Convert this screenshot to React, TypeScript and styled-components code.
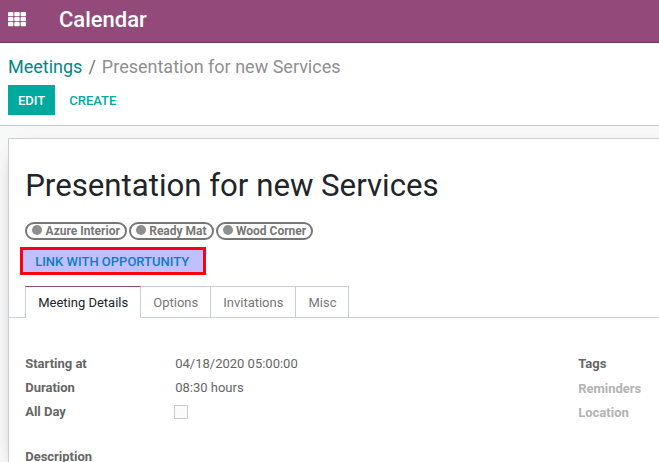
import React from "react";
import styled, { createGlobalStyle } from "styled-components";

const Global = createGlobalStyle`
  *{box-sizing:border-box}
  body{margin:0;overflow:hidden;font-family:Roboto,sans-serif;font-size:13px;background:#f8f8f8;color:#666}
  button{font-family:inherit}
`;
const Page = styled.div`width:659px;height:462px;overflow:hidden;background:#f8f8f8;`;
const Navbar = styled.header`height:43px;background:#934a7b;border-bottom:1px solid #6d3a5d;display:flex;align-items:center;padding:0 0 3px 8px;color:#fff;`;
const AppName = styled.h1`margin:0 0 0 33px;font-size:22px;font-weight:500;line-height:30px;`;
const Control = styled.div`height:83px;background:#fff;border-bottom:1px solid #ccc;padding:12px 8px 0;`;
const Crumbs = styled.div`display:flex;font-size:18px;line-height:23px;color:#8f8f8f;`;
const CrumbLink = styled.span`color:#008784;`;
const Slash = styled.span`padding:0 6px;color:#777;`;
const Actions = styled.div`display:flex;margin-top:7px;`;
const Button = styled.button<{ $primary?: boolean }>`
  height:30px;border:0;padding:0 10px;font-size:13px;font-weight:500;
  background:${p => p.$primary ? "#00a99d" : "transparent"};color:${p => p.$primary ? "#fff" : "#00a99d"};
  & + &{margin-left:4px}
`;
const Sheet = styled.main`margin:12px 0 0 8px;height:330px;width:680px;background:#fff;border:1px solid #c8d0d6;box-shadow:0 5px 20px -15px #000;padding:28px 0 0 16.2px;`;
const Title = styled.h2`margin:0;font-size:31.2px;line-height:38px;font-weight:400;color:#212529;`;
const Tags = styled.div`display:flex;gap:2px;margin-top:17px;`;
const Tag = styled.span`height:18px;border:2px solid #777;border-radius:9px;display:flex;align-items:center;padding:0 5px;font-size:12px;font-weight:700;color:#777;`;
const Dot = styled.i`width:10px;height:10px;border-radius:50%;background:#8f8f8f;margin:-2px 3.4px 0 0;`;
const LinkButton = styled.button`display:block;margin:7px 0 0 -5px;width:186px;height:28px;border:3px solid #ff0010;background:#c0bfff;color:#0d7dc0;font-size:13px;font-weight:500;padding:1px 2px 0 0;`;
const TabBar = styled.nav`display:flex;height:32px;margin:11px 0 0 -16.2px;padding-left:16.2px;border-bottom:1px solid #c8d0d6;`;
const Tab = styled.div<{ $active?: boolean }>`
  height:${p => p.$active ? 32 : 31}px;line-height:31px;padding:0 12px;border:1px solid #c8d0d6;border-left-width:${p => p.$active ? 1 : 0}px;border-bottom:0;
  border-top-color:${p => p.$active ? "#934a7b" : "#c8d0d6"};background:#fff;color:${p => p.$active ? "#212529" : "#777"};
`;
const Groups = styled.div`display:grid;grid-template-columns:553px 1fr;margin-top:34px;`;
const Row = styled.div<{ $drop?: boolean }>`display:grid;grid-template-columns:150px 1fr;height:${p => p.$drop ? 25 : 24}px;line-height:24px;align-items:start;`;
const Label = styled.label<{ $muted?: boolean }>`font-weight:700;color:${p => p.$muted ? "#b3b3b3" : "#666"};`;
const Check = styled.span`width:14px;height:14px;border:1px solid #ccc;background:#fbfbfb;margin:5px 0 0 -1px;`;
const Description = styled.div`margin-top:20px;font-weight:700;line-height:24px;`;

const Apps = () => <svg width="18" height="15" viewBox="0 0 18 15" fill="#fff">{[0, 1, 2].flatMap(y => [0, 1, 2].map(x => <rect key={`${x}${y}`} x={x * 6.3} y={y * 5} width="5.4" height="4.2" rx=".8" />))}</svg>;

export default function App() {
  return <Page><Global />
    <Navbar><Apps /><AppName>Calendar</AppName></Navbar>
    <Control><Crumbs><CrumbLink>Meetings</CrumbLink><Slash>/</Slash><span>Presentation for new Services</span></Crumbs>
      <Actions><Button $primary>EDIT</Button><Button>CREATE</Button></Actions></Control>
    <Sheet><Title>Presentation for new Services</Title>
      <Tags>{["Azure Interior", "Ready Mat", "Wood Corner"].map(t => <Tag key={t}><Dot />{t}</Tag>)}</Tags>
      <LinkButton>LINK WITH OPPORTUNITY</LinkButton>
      <TabBar>{["Meeting Details", "Options", "Invitations", "Misc"].map((t, i) => <Tab key={t} $active={i === 0}>{t}</Tab>)}</TabBar>
      <Groups><div><Row><Label>Starting at</Label><span>04/18/2020 05:00:00</span></Row><Row><Label>Duration</Label><span>08:30 hours</span></Row><Row><Label>All Day</Label><Check /></Row></div>
        <div><Row $drop><Label>Tags</Label></Row><Row><Label $muted>Reminders</Label></Row><Row><Label $muted>Location</Label></Row></div></Groups>
      <Description>Description</Description>
    </Sheet></Page>;
}
